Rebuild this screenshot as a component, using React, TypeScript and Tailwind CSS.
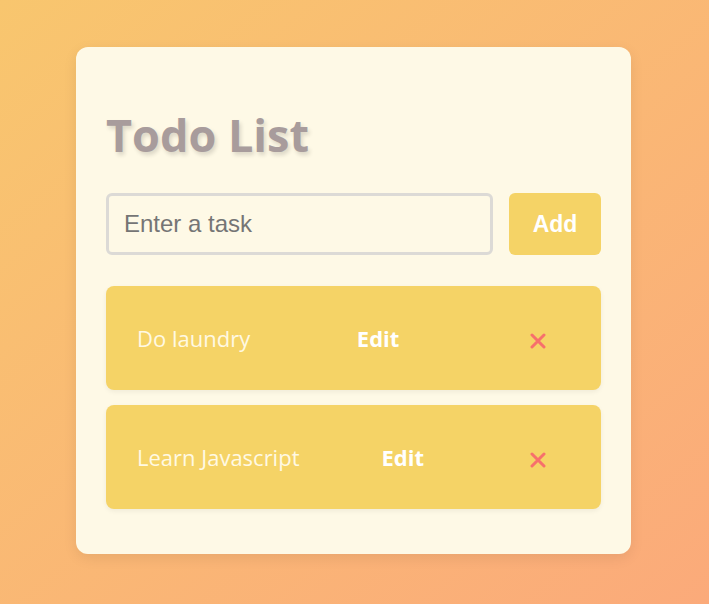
import { useState } from 'react';

type Todo = { id: number; text: string };

const INITIAL: Todo[] = [
  { id: 1, text: 'Do laundry' },
  { id: 2, text: 'Learn Javascript' },
];

export default function App() {
  const [todos, setTodos] = useState<Todo[]>(INITIAL);
  const [task, setTask] = useState('');

  const addTodo = () => {
    if (!task.trim()) return;
    setTodos([...todos, { id: Date.now(), text: task.trim() }]);
    setTask('');
  };

  const removeTodo = (id: number) => setTodos(todos.filter((t) => t.id !== id));

  return (
    <div className="w-full h-[604px] flex items-start justify-start pt-[47px] pl-[76px] bg-gradient-to-br from-[#f8c66e] to-[#fbaa7a] font-['Open_Sans',sans-serif]">
      <div className="w-[555px] rounded-[12px] bg-[#fef9e6] px-[30px] pt-[64px] pb-[45px] shadow-[0_4px_14px_rgba(0,0,0,0.08)]">
        <h1 className="text-[45px] leading-[48px] font-bold text-[#a89c9c] [text-shadow:2px_3px_4px_rgba(0,0,0,0.14)]">
          Todo List
        </h1>

        <div className="flex gap-[16px] mt-[34px]">
          <input
            value={task}
            onChange={(e) => setTask(e.target.value)}
            placeholder="Enter a task"
            className="w-[387px] h-[62px] rounded-[6px] border-[3px] border-[#dcdad6] bg-transparent px-[15px] text-[24px] text-[#333] placeholder:text-[#757575] font-['Liberation_Sans',Arial,sans-serif] outline-none"
          />
          <button
            onClick={addTodo}
            className="w-[92px] h-[62px] rounded-[6px] bg-[#f5d366] text-white text-[23px] font-bold font-['Liberation_Sans',Arial,sans-serif]"
          >
            Add
          </button>
        </div>

        <ul className="mt-[31px] flex flex-col gap-[15px]">
          {todos.map((todo) => (
            <li
              key={todo.id}
              className="h-[104px] rounded-[8px] bg-[#f5d366] pl-[31px] pr-[31px] flex items-center justify-between shadow-[0_2px_5px_rgba(0,0,0,0.06)]"
            >
              <span className="text-[22px] text-[#fff9e3]">{todo.text}</span>
              <button className="text-[22px] font-bold text-white">Edit</button>
              <button onClick={() => removeTodo(todo.id)} className="w-[64px] h-[30px] pt-[6px] flex items-center justify-center">
                <svg width="16" height="16" viewBox="0 0 16 16">
                  <path d="M2 2 L14 14 M14 2 L2 14" stroke="#f7706c" strokeWidth="3" strokeLinecap="round" />
                </svg>
              </button>
            </li>
          ))}
        </ul>
      </div>
    </div>
  );
}
